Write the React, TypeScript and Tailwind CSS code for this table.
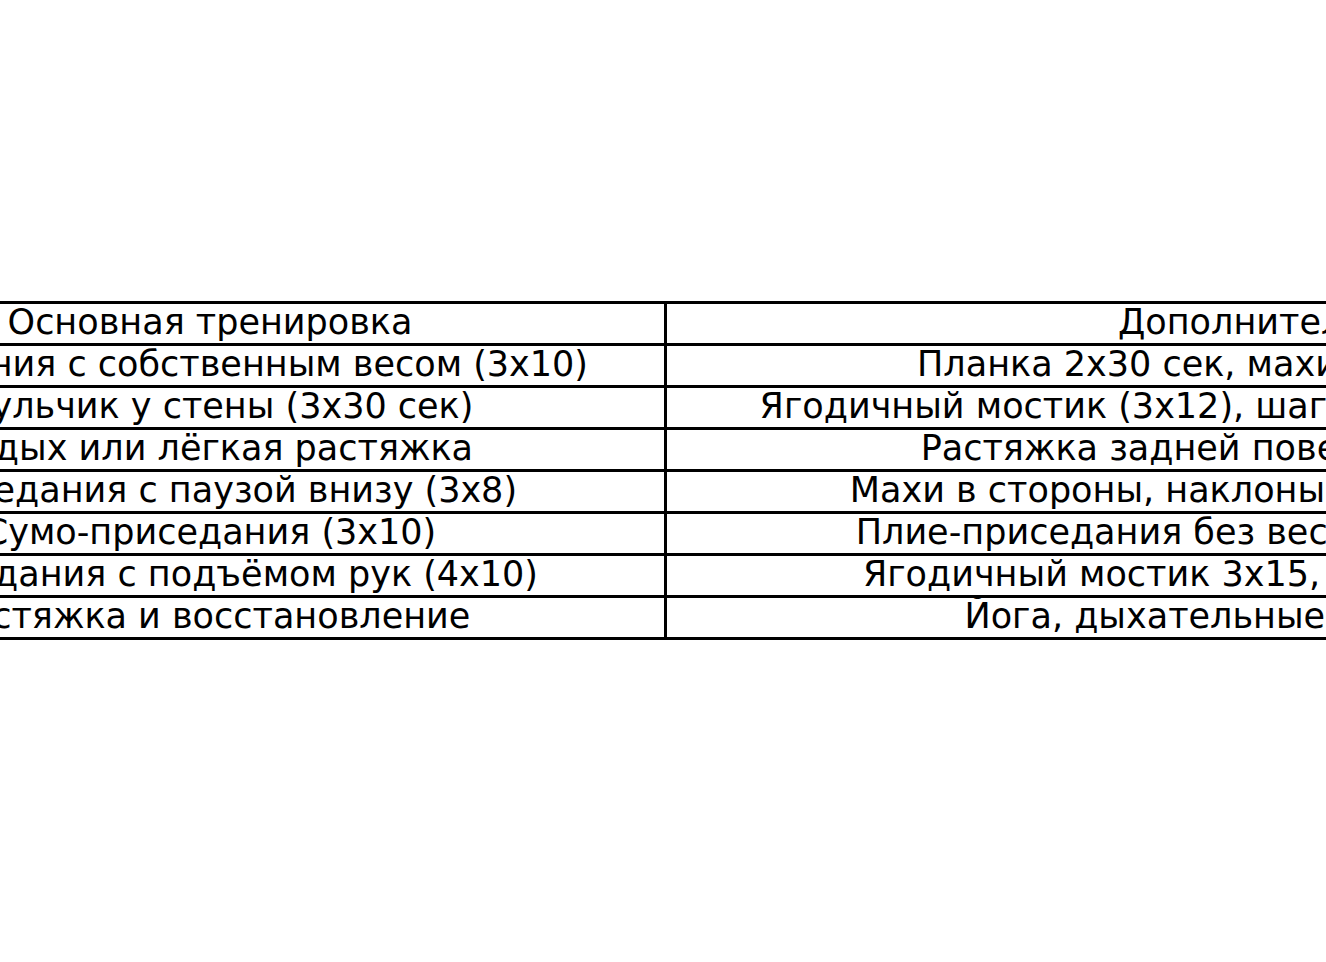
const rows: [string, string][] = [
  ['Основная тренировка', 'Дополнительные упражнения'],
  ['Приседания с собственным весом (3х10)', 'Планка 2х30 сек, махи ногами назад (2х15 на ногу)'],
  ['Стульчик у стены (3х30 сек)', 'Ягодичный мостик (3х12), шаги в сторону с резинкой (3х15 каждой)'],
  ['Отдых или лёгкая растяжка', 'Растяжка задней поверхности бедра (10-15 минут)'],
  ['Приседания с паузой внизу (3х8)', 'Махи в стороны, наклоны вперёд и растяжка спины (3х12)'],
  ['Сумо-приседания (3х10)', 'Плие-приседания без веса (3х12), ходьба 20 минут в день'],
  ['Приседания с подъёмом рук (4х10)', 'Ягодичный мостик 3х15, подъёмы на носки (3х20) в день'],
  ['Растяжка и восстановление', 'Йога, дыхательные упражнения (15-20 минут)'],
];

export default function App() {
  return (
    <div className="w-[1326px] h-[962px] overflow-hidden bg-white pt-[301px]">
      <table
        className="-ml-[247px] border-collapse text-black text-[35px] leading-[37px]"
        style={{ fontFamily: '"DejaVu Sans", sans-serif' }}
      >
        <tbody>
          {rows.map(([a, b], i) => (
            <tr key={i}>
              <td className="w-[911px] min-w-[911px] h-[39px] border-[3px] border-black p-0 pb-[2px] text-center whitespace-nowrap">
                {a}
              </td>
              <td className="w-[1464px] min-w-[1464px] h-[39px] border-[3px] border-black p-0 pb-[2px] text-center whitespace-nowrap">
                {b}
              </td>
            </tr>
          ))}
        </tbody>
      </table>
    </div>
  );
}
